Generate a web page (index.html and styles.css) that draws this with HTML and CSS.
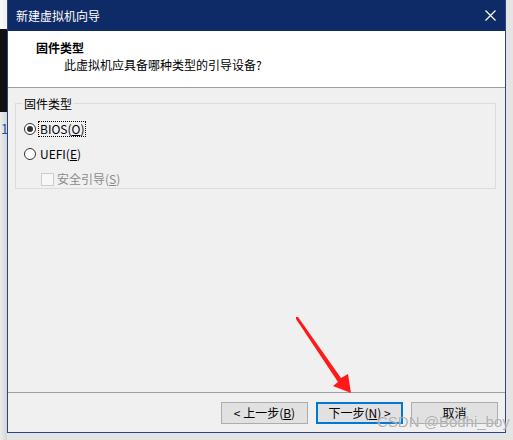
FILE: index.html
```html
<!DOCTYPE html>
<html lang="zh-CN">
<head>
<meta charset="utf-8">
<title>新建虚拟机向导</title>
<link rel="stylesheet" href="styles.css">
</head>
<body>
<div class="page">
  <div class="left-strip">
    <div class="ls-top"></div>
    <div class="ls-dark"></div>
    <div class="ls-rest"><span class="ls-num">1</span></div>
  </div>
  <div class="window">
    <div class="titlebar">
      <span class="title">新建虚拟机向导</span>
      <svg class="close" width="11" height="11" viewBox="0 0 11 11"><path d="M0.5 0.5 L10.5 10.5 M10.5 0.5 L0.5 10.5" stroke="#fff" stroke-width="1.2" fill="none"/></svg>
    </div>
    <div class="header">
      <div class="h-title">固件类型</div>
      <div class="h-sub">此虚拟机应具备哪种类型的引导设备?</div>
    </div>
    <div class="content">
      <fieldset class="group">
        <legend>固件类型</legend>
        <div class="row">
          <span class="radio checked"></span>
          <span class="label focus">BIOS(<u>O</u>)</span>
        </div>
        <div class="row">
          <span class="radio"></span>
          <span class="label">UEFI(<u>E</u>)</span>
        </div>
        <div class="row row-last sub">
          <span class="check"></span>
          <span class="label disabled">安全引导(<u>S</u>)</span>
        </div>
      </fieldset>
    </div>
    <div class="footer">
      <button class="btn">&lt; 上一步(<u>B</u>)</button>
      <button class="btn default">下一步(<u>N</u>) &gt;</button>
      <button class="btn">取消</button>
    </div>
  </div>
  <div class="right-strip"></div>
</div>
<svg class="arrow" width="513" height="440" viewBox="0 0 513 440">
  <polygon points="296,317 298,317 341,378 348,374 351,393 333,386 338,382 296,319" fill="#ff1a1a"/>
</svg>
<div class="watermark">CSDN @Bodhi_boy</div>
</body>
</html>
```
FILE: styles.css
```css
html, body {
  margin: 0;
  padding: 0;
}
body {
  width: 513px;
  height: 440px;
  overflow: hidden;
  position: relative;
  background: #e4e4e4;
  font-family: "Noto Sans CJK SC", "Noto Sans", sans-serif;
  font-size: 12px;
  color: #000;
}
.page {
  display: flex;
  align-items: flex-start;
  height: 440px;
}
.left-strip {
  width: 7px;
  flex: none;
  height: 440px;
  display: flex;
  flex-direction: column;
}
.ls-top {
  height: 29px;
  background: #f2f2f2;
  border-left: 3px solid #f7f7f7;
  box-sizing: border-box;
}
.ls-dark {
  height: 83px;
  background: #111;
}
.ls-rest {
  flex: 1;
  background: linear-gradient(to right, #ececec, #d6d6d6);
  position: relative;
}
.ls-num {
  position: absolute;
  left: 1px;
  top: 9px;
  color: #1a4fa0;
  font-size: 13px;
  line-height: 16px;
}
.window {
  width: 499px;
  height: 433px;
  flex: none;
  box-sizing: border-box;
  border: 1px solid #2a4583;
  border-top: none;
  background: #f0f0f0;
  display: flex;
  flex-direction: column;
}
.titlebar {
  height: 31px;
  flex: none;
  background: #0f2b67;
  display: flex;
  align-items: center;
  justify-content: space-between;
  padding: 0 9px 0 8px;
  color: #fff;
}
.title {
  font-size: 12px;
  line-height: 16px;
}
.close {
  display: block;
}
.header {
  flex: none;
  background: #fff;
  border-bottom: 1px solid #a0a0a0;
  padding-top: 8px;
  box-sizing: border-box;
  height: 57px;
}
.h-title {
  font-weight: bold;
  padding-left: 28px;
  line-height: 17px;
}
.h-sub {
  padding-left: 56px;
  line-height: 17px;
}
.content {
  flex: 1;
  padding: 7px 9px 0 7px;
}
.group {
  margin: 0;
  border: 1px solid #dcdcdc;
  padding: 4px 8px 0 8px;
  min-width: 0;
}
.group legend {
  padding: 0 1px;
  margin-left: -1px;
  line-height: 17px;
}
.row {
  height: 25px;
  display: flex;
  align-items: center;
}
.row-last {
  height: 22px;
  align-items: flex-start;
  padding-top: 0;
  box-sizing: border-box;
}
.radio {
  width: 12px;
  height: 12px;
  box-sizing: border-box;
  border: 1px solid #333;
  border-radius: 50%;
  background: #fff;
  display: flex;
  align-items: center;
  justify-content: center;
  flex: none;
}
.radio.checked::after {
  content: "";
  width: 6px;
  height: 6px;
  border-radius: 50%;
  background: #333;
}
.label {
  margin-left: 4px;
  line-height: 14px;
}
.label.focus {
  outline: 1px dotted #000;
  outline-offset: 0;
  margin-left: 3px;
  padding: 0 1px;
}
.sub {
  padding-left: 17px;
}
.check {
  width: 13px;
  height: 13px;
  box-sizing: border-box;
  border: 1px solid #cccccc;
  background: #f7f7f7;
  flex: none;
  margin-top: 7px;
}
.label.disabled {
  color: #8a8a8a;
  margin-left: 3px;
  line-height: 22px;
  margin-top: 2px;
}
.footer {
  flex: none;
  height: 40px;
  box-sizing: border-box;
  border-top: 1px solid #a0a0a0;
  padding: 9px 7px 0 0;
  display: flex;
  justify-content: flex-end;
  gap: 8px;
}
.btn {
  width: 87px;
  height: 22px;
  box-sizing: border-box;
  border: 1px solid #adadad;
  background: #e1e1e1;
  font-family: inherit;
  font-size: 12px;
  color: #000;
  padding: 0;
  margin: 0;
  line-height: 18px;
}
.btn.default {
  border: 1px solid #0078d7;
  box-shadow: inset 0 0 0 1px #0078d7;
}
.arrow {
  position: absolute;
  left: 0;
  top: 0;
  pointer-events: none;
}
.watermark {
  position: absolute;
  left: 377px;
  top: 413px;
  font-family: "Liberation Sans", sans-serif;
  font-size: 15px;
  line-height: 18px;
  color: rgba(150, 150, 150, 0.75);
  text-shadow: 0 0 1px rgba(255, 255, 255, 0.8);
  white-space: nowrap;
}
```
